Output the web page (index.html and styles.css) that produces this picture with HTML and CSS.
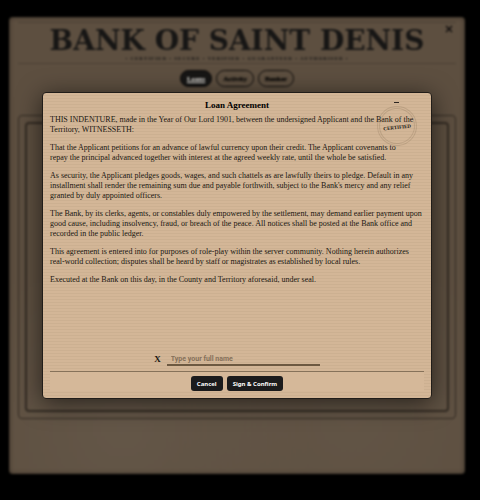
FILE: index.html
```html
<!DOCTYPE html>
<html lang="en">
<head>
    <meta charset="UTF-8">
    <meta name="viewport" content="width=device-width, initial-scale=1.0">
    <title>Bank of Saint Denis</title>
    <link rel="stylesheet" href="styles.css">
</head>
<body>
    <div class="bank">
        <div class="bank-page">
            <header class="bank-header">
                <h1>BANK OF SAINT DENIS</h1>
                <p class="tagline">• CERTIFIED • SECURE • VERIFIED • GUARANTEED • AUTHORISED •</p>
                <button class="close-btn" type="button" aria-label="Close">
                    <svg viewBox="0 0 8 8" width="8" height="8"><path d="M1 1l6 6M7 1L1 7" /></svg>
                </button>
            </header>
            <nav class="tabs">
                <button class="tab active" type="button">Loans</button>
                <button class="tab" type="button">Activity</button>
                <button class="tab" type="button">Banker</button>
            </nav>
            <div class="frame">
                <div class="frame-inner"></div>
            </div>
        </div>

        <!-- Loan agreement modal -->
        <div class="overlay">
            <div class="modal" role="dialog" aria-labelledby="modal-title">
                <h2 id="modal-title">Loan Agreement</h2>
                <button class="minimize-btn" type="button" aria-label="Minimize"></button>
                <div class="stamp"><span>CERTIFIED</span></div>

                <div class="agreement">
                    <p>THIS INDENTURE, made in the Year of Our Lord 1901, between the undersigned Applicant and the Bank of the<br>
                    Territory, WITNESSETH:</p>
                    <p>That the Applicant petitions for an advance of lawful currency upon their credit. The Applicant covenants to<br>
                    repay the principal advanced together with interest at the agreed weekly rate, until the whole be satisfied.</p>
                    <p>As security, the Applicant pledges goods, wages, and such chattels as are lawfully theirs to pledge. Default in any<br>
                    installment shall render the remaining sum due and payable forthwith, subject to the Bank's mercy and any relief<br>
                    granted by duly appointed officers.</p>
                    <p>The Bank, by its clerks, agents, or constables duly empowered by the settlement, may demand earlier payment upon<br>
                    good cause, including insolvency, fraud, or breach of the peace. All notices shall be posted at the Bank office and<br>
                    recorded in the public ledger.</p>
                    <p>This agreement is entered into for purposes of role-play within the server community. Nothing herein authorizes<br>
                    real-world collection; disputes shall be heard by staff or magistrates as established by local rules.</p>
                    <p>Executed at the Bank on this day, in the County and Territory aforesaid, under seal.</p>
                </div>

                <div class="signature">
                    <label for="full-name">X</label>
                    <input id="full-name" type="text" placeholder="Type your full name">
                </div>
                <div class="modal-actions">
                    <button class="btn" type="button">Cancel</button>
                    <button class="btn" type="button">Sign &amp; Confirm</button>
                </div>
            </div>
        </div>
    </div>
</body>
</html>
```
FILE: styles.css
```css
* {
    box-sizing: border-box;
}

body {
    margin: 0;
    height: 100vh;
    padding: 17px 15px 26px 9px;
    background: #000;
    font-family: "Liberation Serif", serif;
}

h1, h2, p {
    margin: 0;
}

button {
    font-family: inherit;
    padding: 0;
    border: none;
    cursor: pointer;
}

.bank {
    position: relative;
    height: 100%;
}

/* Dimmed page behind the modal */
.bank-page {
    display: flex;
    flex-direction: column;
    height: 100%;
    padding: 5px 9px 55px;
    border-radius: 4px;
    background:
        radial-gradient(circle at 25% 90%, rgba(110, 98, 84, 0.4), transparent 35%),
        radial-gradient(circle at 75% 88%, rgba(110, 98, 84, 0.3), transparent 35%),
        #5d4f40;
    box-shadow: inset 0 0 4px rgba(30, 24, 18, 0.7);
    color: #171615;
    filter: blur(1px);
}

.bank-header {
    position: relative;
    height: 42px;
    border-top: 1px solid #4c4135;
    border-bottom: 1px solid #4c4135;
    text-align: center;
}

.bank-header h1 {
    padding-top: 4px;
    font-family: "DejaVu Serif", serif;
    font-size: 28px;
    font-weight: bold;
    line-height: 28px;
    white-space: nowrap;
}

.tagline {
    margin-top: 1px;
    font-size: 5px;
    font-weight: bold;
    line-height: 6px;
    letter-spacing: 1px;
    color: #171615;
}

.close-btn {
    position: absolute;
    top: 2px;
    right: 3px;
    width: 8px;
    height: 8px;
    background: none;
}

.close-btn svg {
    display: block;
    stroke: #0c0b0a;
    stroke-width: 1.3;
}

.tabs {
    display: flex;
    justify-content: center;
    gap: 4px;
    margin-top: 6px;
}

.tab {
    height: 17px;
    padding: 0 6px;
    border: 1px solid #0c0b0a;
    border-radius: 9px;
    background: transparent;
    color: #0c0b0a;
    font-size: 7px;
    font-weight: bold;
    text-shadow: 0 0 1px #0c0b0a;
}

.tab.active {
    background: #171615;
    color: #f0ede8;
    text-decoration: underline;
    text-shadow: none;
}

.frame {
    flex: 1;
    margin-top: 28px;
    padding: 6px;
    border: 1px solid #332b23;
    border-radius: 4px;
}

.frame-inner {
    height: 100%;
    border: 2px solid #332b23;
    border-radius: 4px;
}

.overlay {
    position: absolute;
    inset: 75px 33px;
}

.modal {
    position: relative;
    display: flex;
    flex-direction: column;
    height: 100%;
    padding: 7px;
    border: 1px solid #211d19;
    border-radius: 4px;
    background: repeating-linear-gradient(#d3b697 0 2px, #ccb091 2px 3px);
    box-shadow: 0 4px 24px rgba(0, 0, 0, 0.6);
    color: #1a1712;
}

.modal h2 {
    font-size: 9px;
    line-height: 11px;
    text-align: center;
    color: #000;
}

.minimize-btn {
    position: absolute;
    top: 9px;
    right: 32px;
    width: 5px;
    height: 1px;
    background: #2c2621;
}

.stamp {
    position: absolute;
    top: 13px;
    right: 14px;
    display: flex;
    align-items: center;
    justify-content: center;
    width: 40px;
    height: 40px;
    border: 3px double rgba(110, 90, 65, 0.2);
    border-radius: 50%;
    transform: rotate(-6deg);
}

.stamp span {
    padding-top: 3px;
    font-size: 5px;
    font-weight: bold;
}

.agreement {
    display: flex;
    flex-direction: column;
    flex: 1;
    gap: 8px;
    margin-top: 4px;
    font-size: 8px;
    line-height: 10px;
    white-space: nowrap;
}

.signature {
    display: flex;
    align-items: center;
    justify-content: center;
    gap: 6px;
    margin-bottom: 5px;
}

.signature label {
    font-size: 9px;
    font-weight: bold;
}

.signature input {
    width: 153px;
    height: 14px;
    padding: 2px 4px 0;
    border: none;
    border-bottom: 2px solid #6d5941;
    background: none;
    font-family: Roboto, sans-serif;
    font-size: 7px;
    font-weight: bold;
}

.signature input::placeholder {
    color: #85705a;
}

.modal-actions {
    display: flex;
    justify-content: center;
    gap: 4px;
    padding: 4px 0 0;
    border-top: 1px solid #86725a;
    background: #d5b899;
}

.btn {
    height: 15px;
    padding: 0 6px;
    border-radius: 3px;
    background: #1b1b1c;
    color: #fff;
    font-family: "Noto Sans", sans-serif;
    font-size: 6px;
    font-weight: bold;
}
```
